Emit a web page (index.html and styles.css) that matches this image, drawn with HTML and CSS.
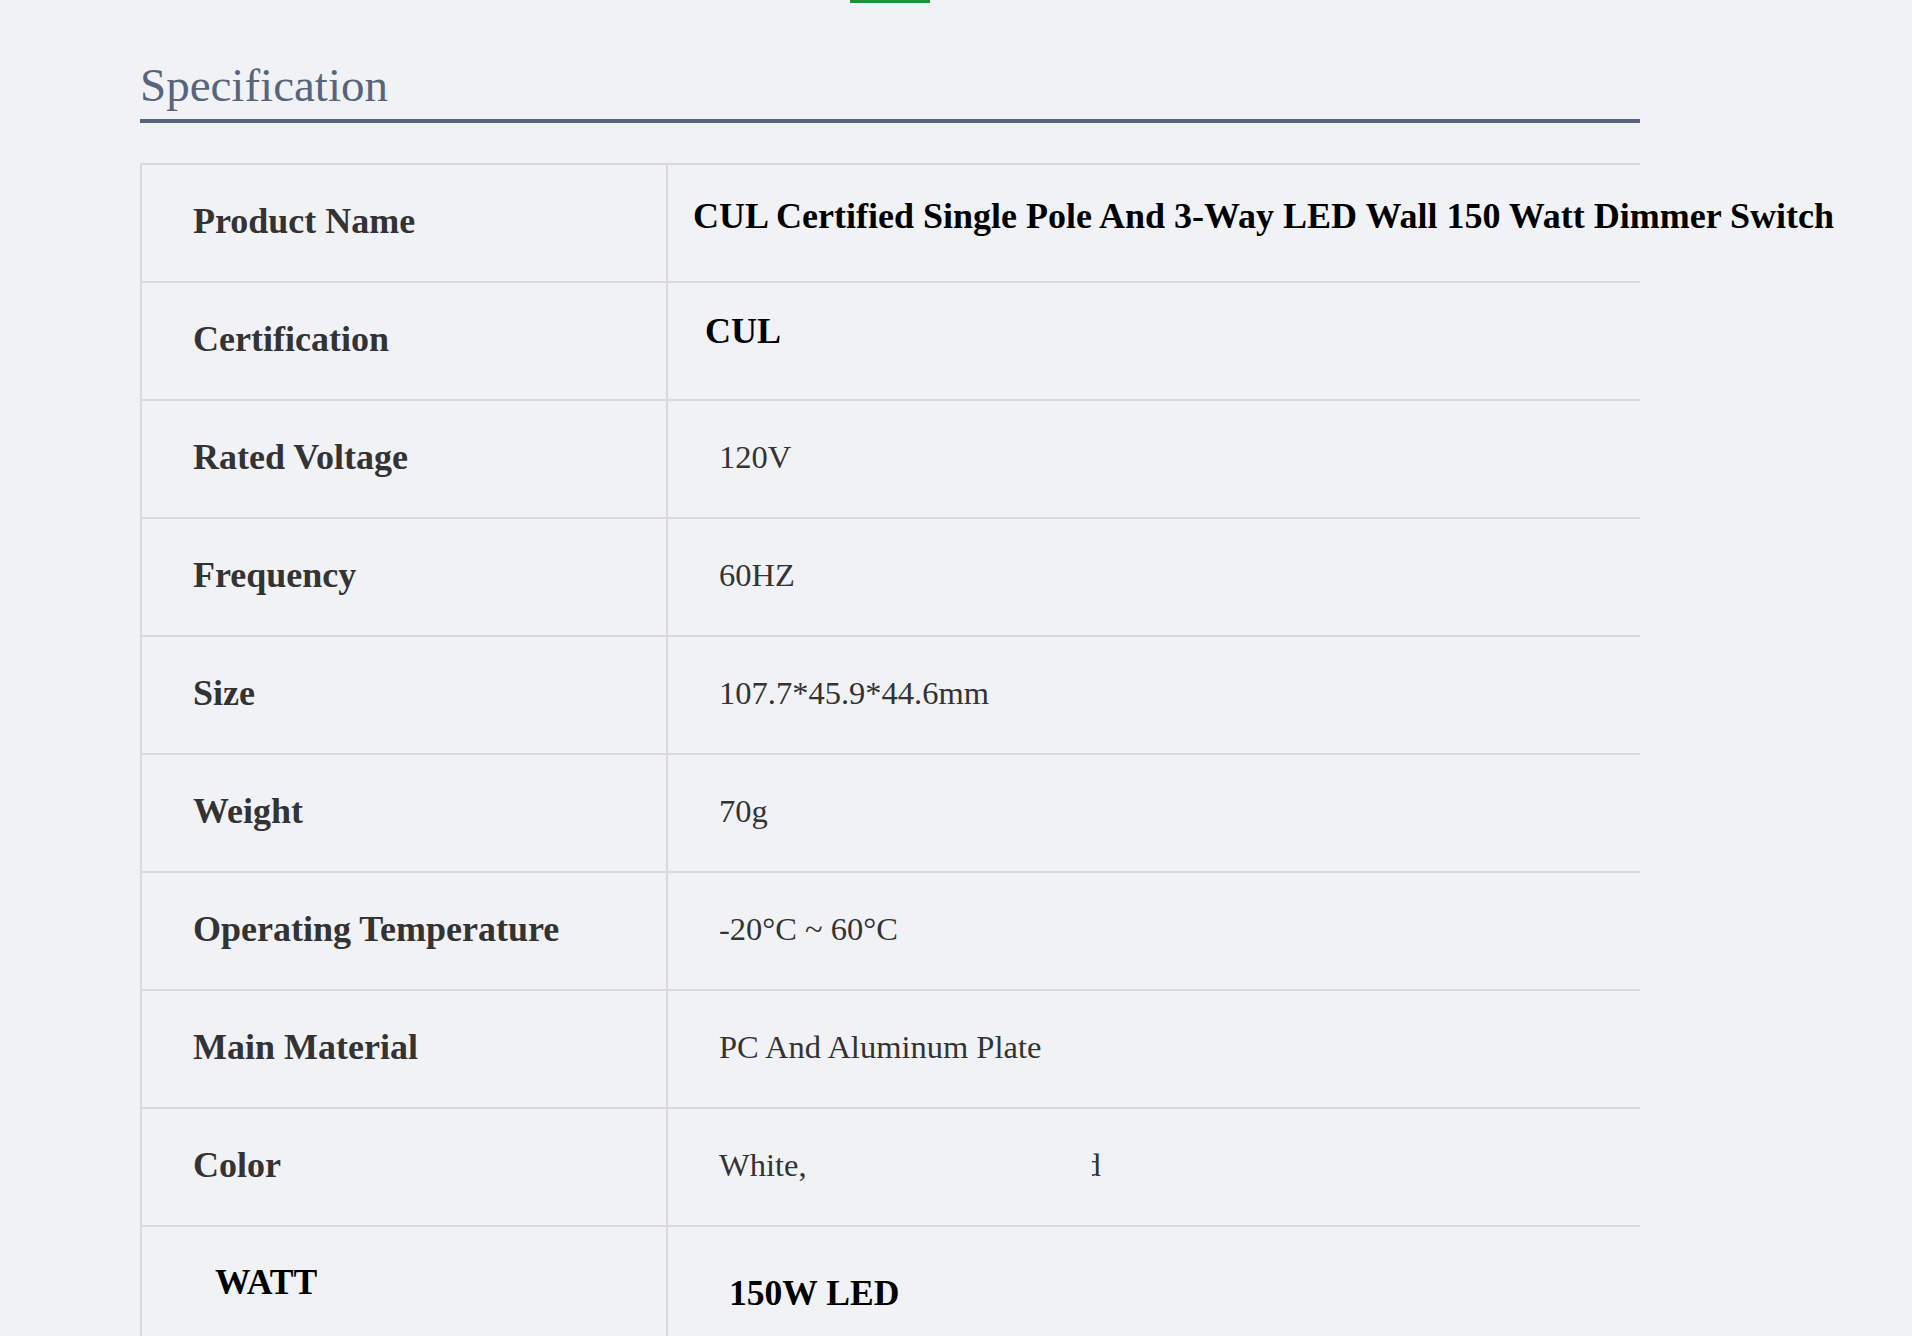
FILE: index.html
```html
<!DOCTYPE html>
<html lang="en">
<head>
<meta charset="utf-8">
<title>Specification</title>
<link rel="stylesheet" href="styles.css">
</head>
<body>
<div class="page">
  <div class="tab-indicator"></div>
  <h2 class="title">Specification</h2>
  <div class="spec">
    <div class="row">
      <div class="cell label">Product Name</div>
      <div class="cell value strong name">CUL Certified Single Pole And 3-Way LED Wall 150 Watt Dimmer Switch</div>
    </div>
    <div class="row">
      <div class="cell label">Certification</div>
      <div class="cell value strong cert">CUL</div>
    </div>
    <div class="row">
      <div class="cell label">Rated Voltage</div>
      <div class="cell value">120V</div>
    </div>
    <div class="row">
      <div class="cell label">Frequency</div>
      <div class="cell value">60HZ</div>
    </div>
    <div class="row">
      <div class="cell label">Size</div>
      <div class="cell value">107.7*45.9*44.6mm</div>
    </div>
    <div class="row">
      <div class="cell label">Weight</div>
      <div class="cell value">70g</div>
    </div>
    <div class="row">
      <div class="cell label">Operating Temperature</div>
      <div class="cell value">-20°C ~ 60°C</div>
    </div>
    <div class="row">
      <div class="cell label">Main Material</div>
      <div class="cell value">PC And Aluminum Plate</div>
    </div>
    <div class="row">
      <div class="cell label">Color</div>
      <div class="cell value"><span class="line">White,<span class="frag"><span>d</span></span></span></div>
    </div>
    <div class="row last">
      <div class="cell label strong watt">WATT</div>
      <div class="cell value strong led">150W LED</div>
    </div>
  </div>
</div>
</body>
</html>
```
FILE: styles.css
```css
html, body {
  margin: 0;
  padding: 0;
}

body {
  background: #f1f2f6;
  font-family: "Liberation Serif", "Times New Roman", serif;
  color: #333333;
}

.page {
  width: 1500px;
  margin-left: 140px;
}

.tab-indicator {
  width: 80px;
  height: 3px;
  margin-left: 710px;
  background: #1a9638;
}

.title {
  margin: 59px 0 0;
  padding: 0 0 10px;
  font-size: 47px;
  font-weight: 400;
  line-height: 1;
  color: #56657c;
  border-bottom: 4px solid #56657c;
}

.spec {
  margin-top: 40px;
}

.row {
  display: grid;
  grid-template-columns: 526px 974px;
  height: 118px;
}

.row.last {
  height: 111px;
}

.cell {
  box-sizing: border-box;
  display: flex;
  align-items: center;
  padding: 0 0 4px 51px;
  border-top: 2px solid #d9d9dd;
  border-left: 2px solid #d9d9dd;
  white-space: nowrap;
  min-width: 0;
}

.label {
  font-size: 36px;
  font-weight: 700;
  color: #333333;
}

.value {
  font-size: 32.5px;
  color: #333333;
}

.strong {
  font-size: 36px;
  font-weight: 700;
  color: #000000;
}

.name {
  padding: 0 0 14px 25px;
}

.cert {
  padding: 0 0 20px 37px;
}

.watt {
  font-size: 35.6px;
  padding: 0 0 0 73px;
}

.led {
  font-size: 35.6px;
  padding: 23px 0 0 61px;
}

.line {
  display: inline-block;
}

.frag {
  display: inline-block;
  vertical-align: top;
  width: 9px;
  margin-left: 285px;
  overflow: hidden;
}

.frag span {
  display: inline-block;
  margin-left: -7px;
}
```
